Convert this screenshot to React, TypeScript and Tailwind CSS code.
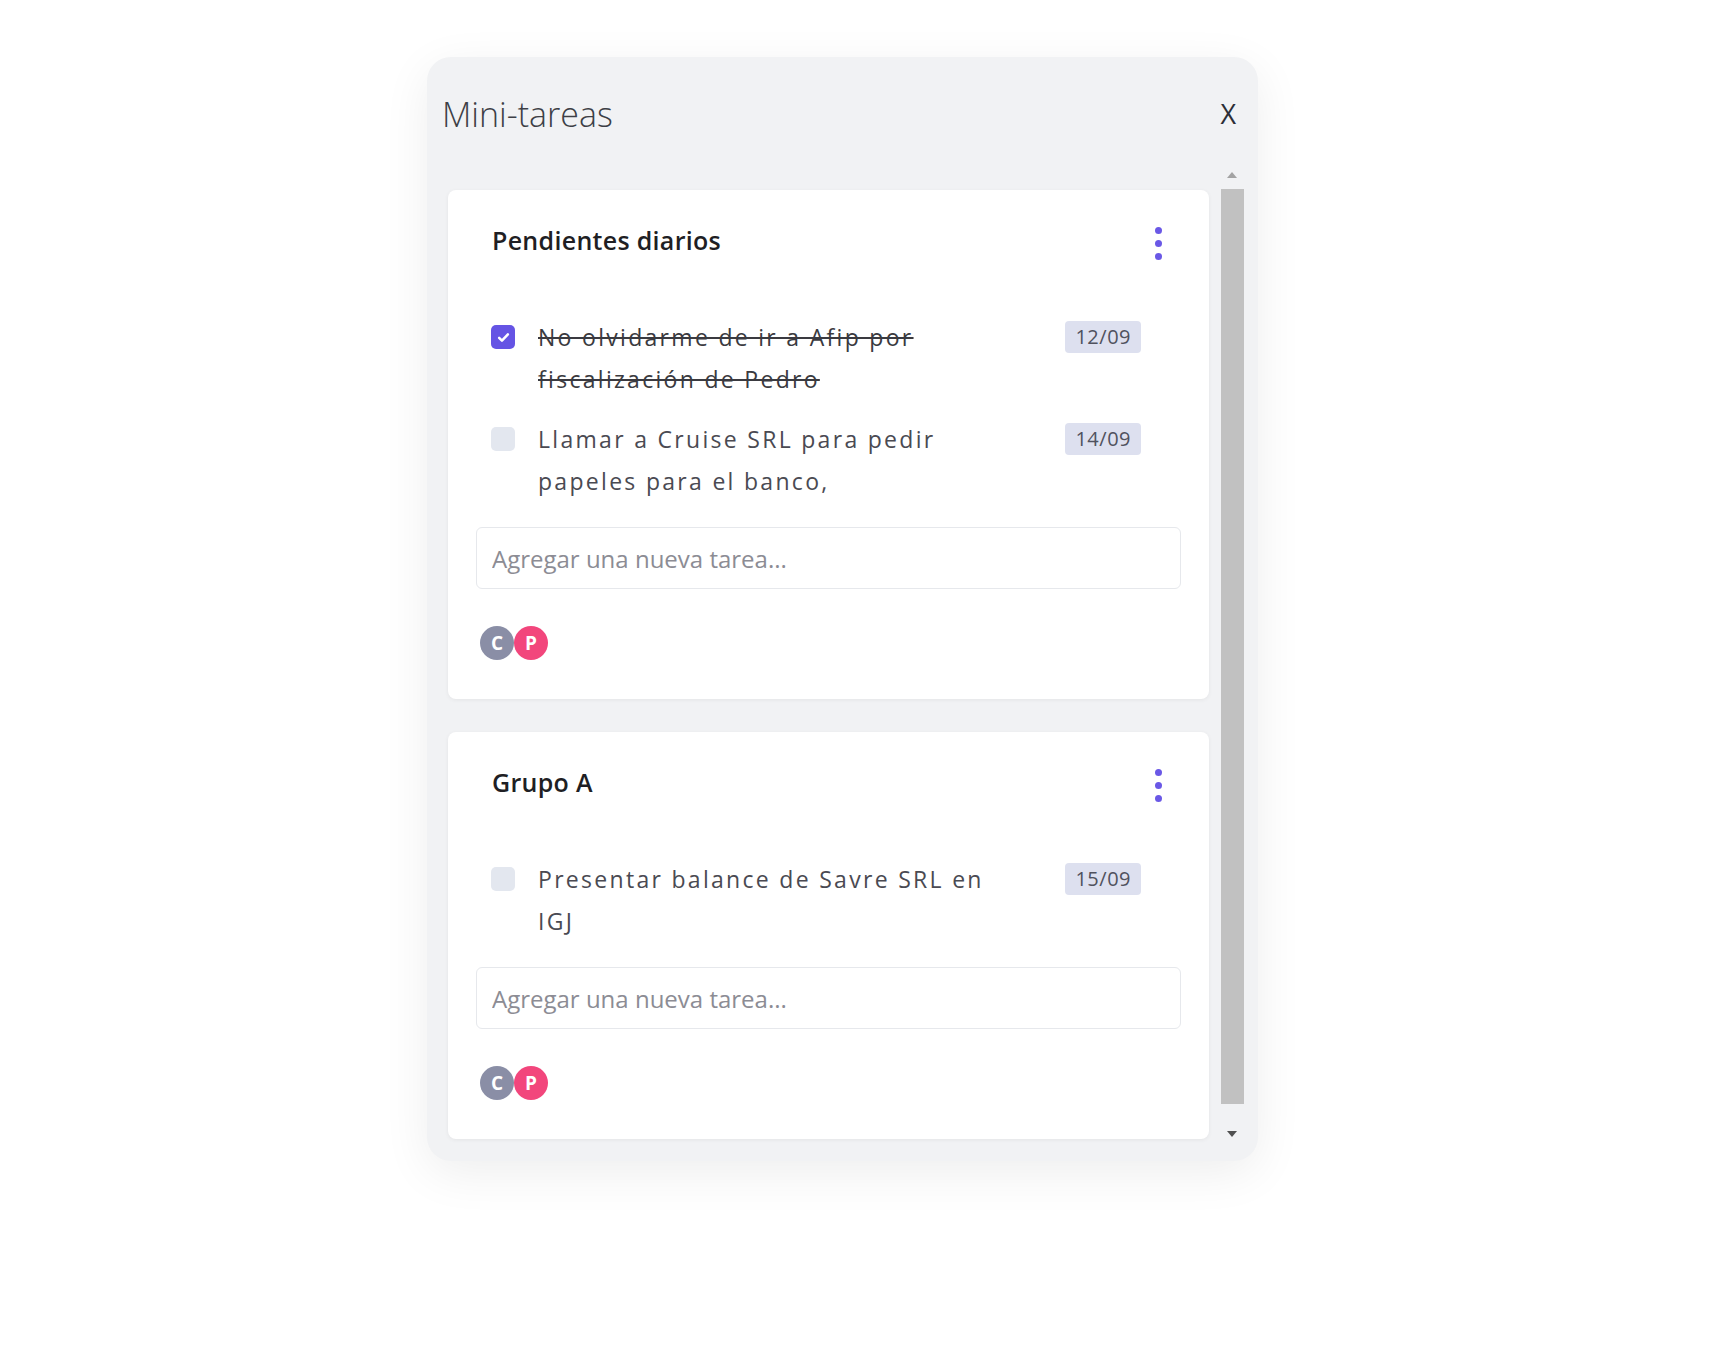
type Task = { text: string; date: string; done: boolean };
type Group = { name: string; tasks: Task[] };

const groups: Group[] = [
  {
    name: "Pendientes diarios",
    tasks: [
      { text: "No olvidarme de ir a Afip por fiscalización de Pedro", date: "12/09", done: true },
      { text: "Llamar a Cruise SRL para pedir papeles para el banco,", date: "14/09", done: false },
    ],
  },
  {
    name: "Grupo A",
    tasks: [{ text: "Presentar balance de Savre SRL en IGJ", date: "15/09", done: false }],
  },
];

const font = { fontFamily: '"Open Sans", "Noto Sans", sans-serif' };

const Checkbox = ({ checked }: { checked: boolean }) =>
  checked ? (
    <div className="w-[24px] h-[24px] rounded-[5px] bg-[#6554e4] flex items-center justify-center">
      <svg width="15" height="15" viewBox="0 0 24 24" fill="none" stroke="#fff" strokeWidth="4" strokeLinecap="round" strokeLinejoin="round">
        <path d="M5 12.5l4.5 4.5L19 7" />
      </svg>
    </div>
  ) : (
    <div className="w-[24px] h-[24px] rounded-[5px] bg-[#e3e7ef]" />
  );

const Card = ({ group }: { group: Group }) => (
  <div className="bg-white rounded-[8px] shadow-[0_1px_4px_rgba(0,0,0,0.06)] px-[28px] pt-[31px] pb-[39px]">
    <div className="flex items-center justify-between h-[40px] pl-[16px] pr-[19px]">
      <h3 className="text-[25px] font-semibold text-[#1f1f24] tracking-[0.3px]">{group.name}</h3>
      <div className="flex flex-col gap-[6px] mt-[4px]">
        <span className="w-[7px] h-[7px] rounded-full bg-[#6a58e6]" />
        <span className="w-[7px] h-[7px] rounded-full bg-[#6a58e6]" />
        <span className="w-[7px] h-[7px] rounded-full bg-[#6a58e6]" />
      </div>
    </div>
    <div className="flex flex-col gap-[18px] mt-[55px] pl-[15px] pr-[40px]">
      {group.tasks.map((t) => (
        <div key={t.text} className="flex items-start">
          <div className="h-[42px] flex items-center">
            <Checkbox checked={t.done} />
          </div>
          <p
            className={`ml-[23px] w-[470px] text-[23px] leading-[42px] tracking-[2.3px] ${
              t.done ? "line-through text-[#3a3a40]" : "text-[#4a4a52]"
            }`}
          >
            {t.text}
          </p>
          <div className="ml-auto mt-[5px] h-[32px] px-[10px] flex items-center rounded-[4px] bg-[#dde0ef] text-[20px] tracking-[0.5px] text-[#50525e]">
            {t.date}
          </div>
        </div>
      ))}
    </div>
    <input
      className="mt-[25px] w-full h-[62px] rounded-[6px] border border-[#e6e8ec] bg-white px-[15px] text-[24px] text-[#444] placeholder:text-[#8c8c94] outline-none"
      placeholder="Agregar una nueva tarea..."
      style={font}
    />
    <div className="flex mt-[37px] pl-[4px]">
      <span className="w-[34px] h-[34px] rounded-full bg-[#8a8ea6] text-white text-[19px] font-bold flex items-center justify-center">
        C
      </span>
      <span className="w-[34px] h-[34px] rounded-full bg-[#f2467c] text-white text-[19px] font-bold flex items-center justify-center">
        P
      </span>
    </div>
  </div>
);

const App = () => {
  return (
    <div className="min-h-screen bg-white pl-[427px] pt-[57px]" style={font}>
      <div className="w-[831px] h-[1104px] rounded-[24px] bg-[#f1f2f4] shadow-[0_12px_48px_rgba(0,0,0,0.07)] flex flex-col">
        <div className="h-[114px] flex items-center justify-between pl-[15px] pr-[22px]">
          <h2 className="text-[34px] font-light text-[#3d3f46]">Mini-tareas</h2>
          <button className="text-[27px] font-normal text-[#2c2e36]">X</button>
        </div>
        <div className="flex flex-1 pl-[21px] pr-[14px] pb-[16px]">
          <div className="w-[761px] flex flex-col gap-[33px] pt-[19px]">
            {groups.map((g) => (
              <Card key={g.name} group={g} />
            ))}
          </div>
          <div className="ml-[11px] w-[24px] flex flex-col items-center">
            <div className="h-[18px] flex items-start pt-[1px]">
              <span className="w-0 h-0 border-l-[5px] border-r-[5px] border-b-[6px] border-l-transparent border-r-transparent border-b-[#a3a3a3]" />
            </div>
            <div className="w-[23px] h-[915px] bg-[#c1c1c1]" />
            <div className="mt-[27px]">
              <span className="block w-0 h-0 border-l-[5px] border-r-[5px] border-t-[6px] border-l-transparent border-r-transparent border-t-[#505050]" />
            </div>
          </div>
        </div>
      </div>
    </div>
  );
};

export default App;
